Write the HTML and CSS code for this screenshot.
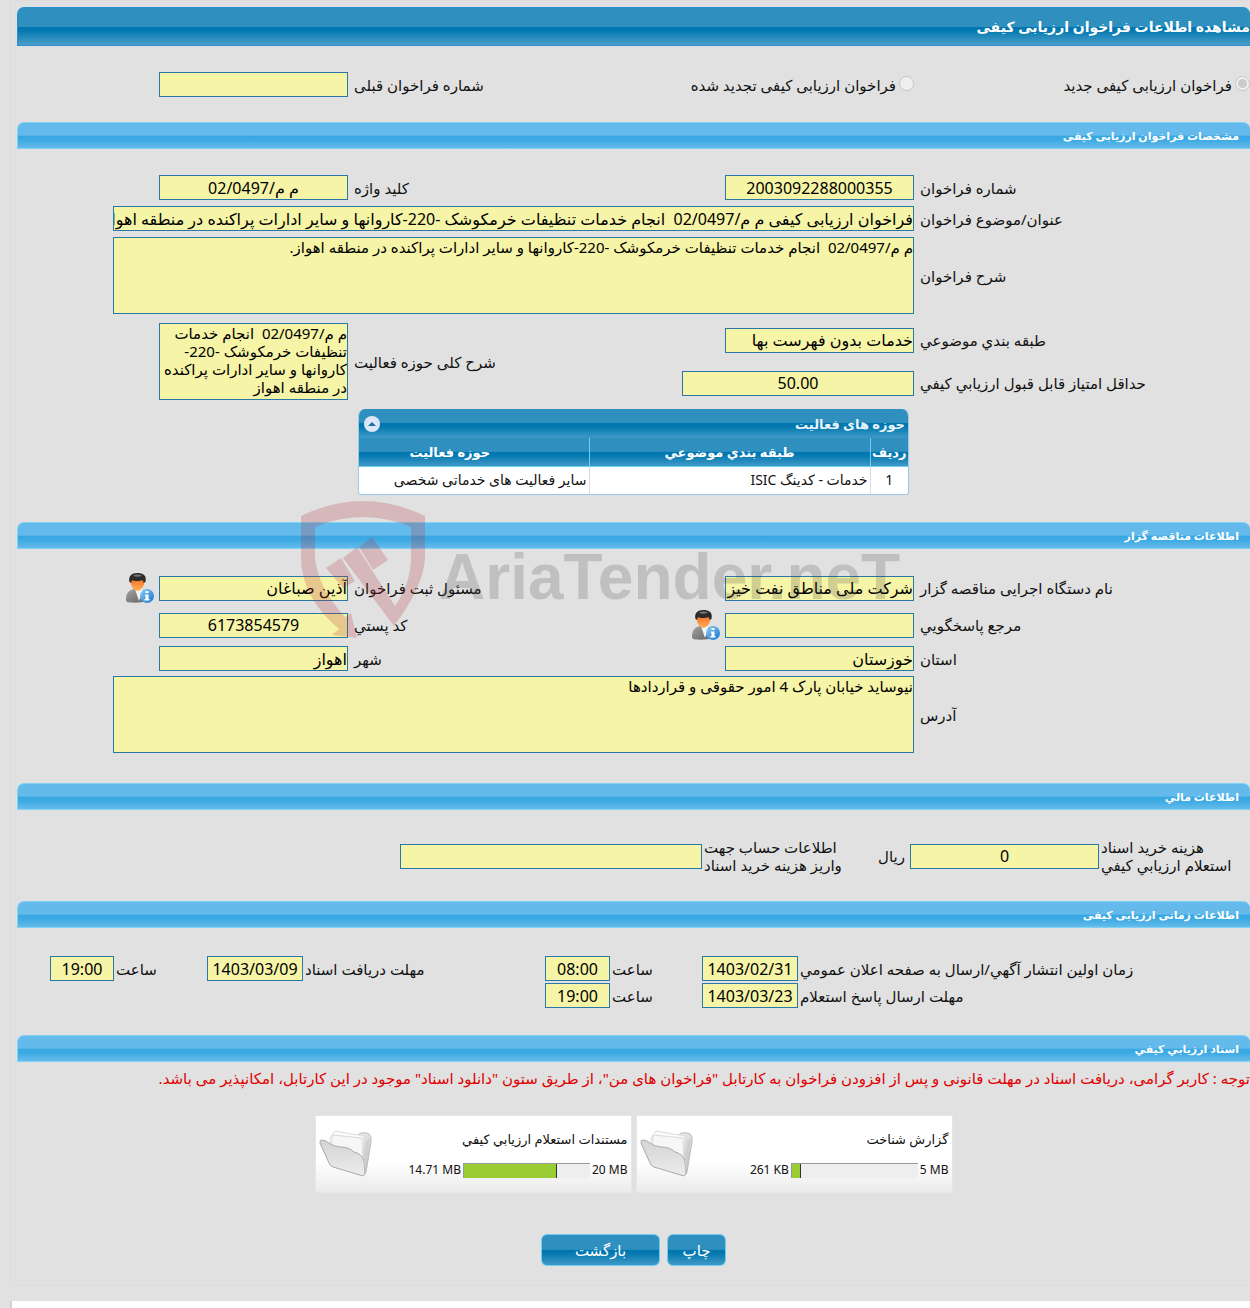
FILE: index.html
```html
<!DOCTYPE html>
<html lang="fa" dir="rtl">
<head>
  <meta charset="UTF-8">
  <title>مشاهده اطلاعات فراخوان ارزیابی کیفی</title>
  <meta name="viewport" content="width=device-width, initial-scale=1">
  <link rel="stylesheet" href="styles.css">
</head>
<body>
  <!-- icons -->
  <svg class="sprite" aria-hidden="true">
    <defs>
      <linearGradient id="gSuit" x1="0" y1="0" x2="1" y2="1">
        <stop offset="0" stop-color="#a5a5a5"/><stop offset="1" stop-color="#5e5e5e"/>
      </linearGradient>
      <linearGradient id="gFace" x1="0" y1="0" x2="0" y2="1">
        <stop offset="0" stop-color="#f26a1b"/><stop offset="1" stop-color="#ffb160"/>
      </linearGradient>
      <linearGradient id="gInfo" x1="0" y1="0" x2="1" y2="1">
        <stop offset="0" stop-color="#8fd0fa"/><stop offset="1" stop-color="#1273cf"/>
      </linearGradient>
      <linearGradient id="gBack" x1="0" y1="0" x2="0" y2="1">
        <stop offset="0" stop-color="#e6e6e6"/><stop offset="1" stop-color="#b4b4b4"/>
      </linearGradient>
      <linearGradient id="gFront" x1="0" y1="0" x2="0" y2="1">
        <stop offset="0" stop-color="#d4d4d4"/><stop offset="1" stop-color="#ececec"/>
      </linearGradient>
    </defs>
    <symbol id="person" viewBox="0 0 32 32">
      <path d="M3 27C3 20 7 18 11 17H18C23 18 24 22 24 29C18 31 8 31 4 30C3 29 3 28 3 27Z" fill="url(#gSuit)"/>
      <path d="M12 17L16 29L20 17Z" fill="#f6f6f6"/>
      <path d="M8 8C8 5 21 5 21 8V12C20 16 17 19 14.500 19C12 19 9 16 8 12Z" fill="url(#gFace)"/>
      <path d="M6.500 10C5 4 9 1 14 1C20 1 24 3 22.500 10L20.500 11C20.500 9 20 8 18 8.500C14 9.500 11 9 9 8L8 11Z" fill="#2b2b2b"/>
      <path d="M10 4C12 2 17 2 19 4C16 5 13 5 10 4Z" fill="#777"/>
      <circle cx="24" cy="24" r="7" fill="url(#gInfo)"/>
      <path d="M22.500 19H25.500V21H22.500ZM22 22.500H25.500V27H26.500V28.500H21.500V27H22.500V24H22Z" fill="#fff"/>
    </symbol>
    <symbol id="folder" viewBox="0 0 54 50">
      <path d="M36 8L40 5Q43 3 47 4L50 5Q53 7 52 13L47 43Q46 46 43 46Z" fill="url(#gBack)" stroke="#bcbcbc"/>
      <path d="M16 2L22 3L45 7L44 40L12 34L11 9Z" fill="#fafafa" stroke="#dedede"/>
      <path d="M13 6L43 9L44 38L12 32Z" fill="#f6f6f6" stroke="#dadada"/>
      <path d="M2 11Q7 11 10 14Q13 17 21 18Q30 18 35 23Q43 25 45 32L46 45L44 47L14 38Q11 37 10 34L1 14Q1 11 2 11Z" fill="url(#gFront)" stroke="#a9a9a9"/>
      <path d="M45 32L48 12L51 8L46 45Z" fill="#cfcfcf"/>
    </symbol>
  </svg>

  <div class="page">
    <h1 class="title">مشاهده اطلاعات فراخوان ارزیابی کیفی</h1>

    <div class="fields kind">
      <div class="choice">
        <input type="radio" id="kindNew" name="kind" checked disabled>
        <label for="kindNew">فراخوان ارزیابی کیفی جدید</label>
      </div>
      <div class="choice">
        <input type="radio" id="kindRenew" name="kind" disabled>
        <label for="kindRenew">فراخوان ارزیابی کیفی تجدید شده</label>
      </div>
      <label class="label" for="prevNo">شماره فراخوان قبلی</label>
      <div><input type="text" class="box" id="prevNo" readonly></div>
    </div>

    <!-- مشخصات فراخوان -->
    <h2 class="bar">مشخصات فراخوان ارزیابی کیفی</h2>
    <div class="fields">
      <label class="label" for="callNo">شماره فراخوان</label>
      <div><input type="text" class="box center" id="callNo" value="2003092288000355" readonly></div>
      <label class="label" for="keyword">کلید واژه</label>
      <div><input type="text" class="box center" id="keyword" value="م م/02/0497" readonly></div>

      <label class="label" for="subject">عنوان/موضوع فراخوان</label>
      <div class="wide"><input type="text" class="box" id="subject" value="فراخوان ارزیابی کیفی م م/02/0497  انجام خدمات تنظیفات خرمکوشک -220-کاروانها و سایر ادارات پراکنده در منطقه اهواز" readonly></div>

      <label class="label" for="desc">شرح فراخوان</label>
      <div class="wide"><textarea class="box area" id="desc" readonly>م م/02/0497  انجام خدمات تنظیفات خرمکوشک -220-کاروانها و سایر ادارات پراکنده در منطقه اهواز.</textarea></div>
    </div>
    <div class="fields category">
      <label class="label" for="category">طبقه بندي موضوعي</label>
      <div><input type="text" class="box" id="category" value="خدمات بدون فهرست بها" readonly></div>
      <label class="label tall" for="scope">شرح کلی حوزه فعالیت</label>
      <div class="tall"><textarea class="box area" id="scope" readonly>م م/02/0497  انجام خدمات تنظیفات خرمکوشک -220-کاروانها و سایر ادارات پراکنده در منطقه اهواز</textarea></div>
      <label class="label" for="minScore">حداقل امتياز قابل قبول ارزيابي كيفي</label>
      <div><input type="text" class="box score center" id="minScore" value="50.00" readonly></div>
    </div>

    <div class="panel">
      <div class="panel-head">
        <span>حوزه های فعالیت</span>
        <button type="button" class="collapse" aria-label="بستن">
          <svg viewBox="0 0 16 16"><circle cx="8" cy="8" r="8" fill="#dbe6f6"/><path d="M4 10L8 6L12 10Z" fill="#1c6f9f"/></svg>
        </button>
      </div>
      <table class="grid">
        <thead>
          <tr><th class="num">ردیف</th><th class="cat">طبقه بندي موضوعي</th><th class="field">حوزه فعالیت</th></tr>
        </thead>
        <tbody>
          <tr><td class="num">1</td><td>خدمات - کدینگ ISIC</td><td>سایر فعالیت های خدماتی شخصی</td></tr>
        </tbody>
      </table>
    </div>

    <!-- مناقصه گزار -->
    <h2 class="bar">اطلاعات مناقصه گزار</h2>
    <div class="fields owner">
      <label class="label" for="org">نام دستگاه اجرایی مناقصه گزار</label>
      <div><input type="text" class="box" id="org" value="شرکت ملی مناطق نفت خیز جنوب" readonly></div>
      <label class="label" for="registrar">مسئول ثبت فراخوان</label>
      <div class="with-icon">
        <input type="text" class="box" id="registrar" value="آذین صباغان" readonly>
        <button type="button" class="person" aria-label="مشخصات"><svg><use href="#person"/></svg></button>
      </div>

      <label class="label" for="contact">مرجع پاسخگويي</label>
      <div class="with-icon">
        <input type="text" class="box" id="contact" readonly>
        <button type="button" class="person" aria-label="مشخصات"><svg><use href="#person"/></svg></button>
      </div>
      <label class="label" for="postal">کد پستي</label>
      <div><input type="text" class="box center" id="postal" value="6173854579" readonly></div>

      <label class="label" for="province">استان</label>
      <div><input type="text" class="box" id="province" value="خوزستان" readonly></div>
      <label class="label" for="city">شهر</label>
      <div><input type="text" class="box" id="city" value="اهواز" readonly></div>

      <label class="label" for="address">آدرس</label>
      <div class="wide"><textarea class="box area" id="address" readonly>نیوساید خیابان پارک 4 امور حقوقی و قراردادها</textarea></div>
    </div>

    <!-- اطلاعات مالی -->
    <h2 class="bar">اطلاعات مالي</h2>
    <div class="money">
      <label class="label" for="fee">هزینه خرید اسناد<br>استعلام ارزيابي كيفي</label>
      <input type="text" class="box center" id="fee" value="0" readonly>
      <span class="unit">ریال</span>
      <label class="label" for="account">اطلاعات حساب جهت<br>واریز هزینه خرید اسناد</label>
      <input type="text" class="box" id="account" readonly>
    </div>

    <!-- زمانبندی -->
    <h2 class="bar">اطلاعات زمانی ارزیابی کیفی</h2>
    <div class="times">
      <label class="label" for="pubDate">زمان اولين انتشار آگهي/ارسال به صفحه اعلان عمومي</label>
      <input type="text" class="box center" id="pubDate" value="1403/02/31" readonly>
      <label class="label" for="pubTime">ساعت</label>
      <input type="text" class="box center" id="pubTime" value="08:00" readonly>
      <label class="label" for="docDate">مهلت دریافت اسناد</label>
      <input type="text" class="box center" id="docDate" value="1403/03/09" readonly>
      <label class="label" for="docTime">ساعت</label>
      <input type="text" class="box center" id="docTime" value="19:00" readonly>

      <label class="label first" for="replyDate">مهلت ارسال پاسخ استعلام</label>
      <input type="text" class="box center" id="replyDate" value="1403/03/23" readonly>
      <label class="label" for="replyTime">ساعت</label>
      <input type="text" class="box center" id="replyTime" value="19:00" readonly>
    </div>

    <!-- اسناد -->
    <h2 class="bar">اسناد ارزيابي كيفي</h2>
    <p class="notice">توجه : کاربر گرامی، دریافت اسناد در مهلت قانونی و پس از افزودن فراخوان به کارتابل "فراخوان های من"، از طریق ستون "دانلود اسناد" موجود در این کارتابل، امکانپذیر می باشد.</p>

    <div class="files">
      <div class="file">
        <div class="file-text">
          <div class="file-name">گزارش شناخت</div>
          <div class="usage" dir="ltr">
            <span>261 KB</span>
            <div class="meter"><div class="used" style="width: 7%"></div></div>
            <span>5 MB</span>
          </div>
        </div>
        <svg class="folder"><use href="#folder"/></svg>
      </div>
      <div class="file">
        <div class="file-text">
          <div class="file-name">مستندات استعلام ارزيابي كيفي</div>
          <div class="usage" dir="ltr">
            <span>14.71 MB</span>
            <div class="meter"><div class="used" style="width: 74%"></div></div>
            <span>20 MB</span>
          </div>
        </div>
        <svg class="folder"><use href="#folder"/></svg>
      </div>
    </div>

    <div class="buttons">
      <button type="button" class="btn">چاپ</button>
      <button type="button" class="btn back">بازگشت</button>
    </div>

    <!-- watermark -->
    <div class="watermark" dir="ltr">
      <svg viewBox="8 8 128 141">
        <path d="M10 25Q72-5 134 25V66Q133 95 103 135L52 67L66 56L104 115Q120 92 120 66V36Q72 16 24 36V66Q26 95 54 126L60 122L66 147L41 144L48 138Q10 106 10 66Z"/>
        <path d="M68 56L81 46L97 69L82 79ZM35 77L50 67L64 90L52 97Z"/>
      </svg>
      <span>AriaTender.neT</span>
    </div>
  </div>

  <div class="bottom"></div>
</body>
</html>
```
FILE: styles.css
```css
* {
  box-sizing: border-box;
}
body {
  margin: 0;
  background: #e1e1e1;
  color: #111;
  font-family: "Noto Sans", "DejaVu Sans", sans-serif;
  font-size: 15px;
  line-height: 18px;
  overflow-x: hidden;
}
.sprite {
  position: absolute;
  width: 0;
  height: 0;
}
.page {
  position: relative;
  margin-left: 10px;
  padding: 6px 0 19px 6px;
  border: 1px solid #dcdcdc;
  border-right: 0;
}

/* headings */
.title {
  margin: 0;
  height: 39px;
  line-height: 37px;
  font-size: 14px;
  color: #fff;
  border: 1px solid #2a8fcf;
  border-width: 1px 0 1px 1px;
  border-radius: 7px 7px 0 0;
  background: linear-gradient(#2f90bf 0, #2f90bf 50%, #0076ae 51%, #0378b0 60%, #4a9fc9 100%);
}
.bar {
  margin: 0;
  height: 27px;
  line-height: 25px;
  padding-right: 11px;
  font-size: 11px;
  color: #fff;
  border: 1px solid #7fd3f5;
  border-width: 1px 0 1px 1px;
  border-radius: 7px 7px 0 0;
  background: linear-gradient(#64baea 0, #64baea 48%, #37a7e2 54%, #3fabe4 70%, #66bbea 100%);
}

/* form rows */
.fields {
  display: grid;
  grid-template-columns: 336fr 416fr 150fr 331fr;
  gap: 6px 0;
  align-items: center;
  margin: 26px 0 9px;
}
.kind {
  margin: 26px 0 25px;
}
.category {
  row-gap: 9px;
  grid-template-rows: 34px 34px;
  margin: 9px 0;
}
.owner {
  row-gap: 5px;
  margin: 23px 0 30px;
}
.label {
  text-align: left;
  padding-left: 6px;
}
.wide {
  grid-column: 2 / 5;
}
.tall {
  grid-row: 1 / 3;
}
.tall.label {
  grid-column: 3;
}
div.tall {
  grid-column: 4;
}
.fields > div {
  display: flex;
}
.choice {
  gap: 3px;
}
.choice input {
  width: 15px;
  height: 15px;
  margin: 0;
}
.box {
  display: block;
  width: 189px;
  height: 25px;
  margin: 0;
  padding: 0;
  border: 1px solid #2a78a8;
  border-radius: 0;
  background: #f6f4a6;
  color: #000;
  font-family: inherit;
  font-size: 16px;
  outline: none;
}
.center {
  text-align: center;
}
.score {
  width: 232px;
}
.area {
  height: 77px;
  font-size: 15px;
  line-height: 18px;
  resize: none;
  overflow: hidden;
}
.wide .box {
  width: 801px;
  max-width: 100%;
}
.with-icon {
  align-items: center;
  gap: 4px;
}
.person {
  width: 32px;
  height: 32px;
  padding: 0;
  border: 0;
  background: none;
  cursor: pointer;
}
.person svg {
  display: block;
  width: 32px;
  height: 32px;
}

/* activity table */
.panel {
  width: 551px;
  margin: 0 auto 27px;
  border: 1px solid #9cc9e6;
  border-top: 0;
  border-radius: 7px 7px 3px 3px;
  overflow: hidden;
}
.panel-head {
  display: flex;
  justify-content: space-between;
  align-items: center;
  height: 29px;
  padding: 0 3px 0 5px;
  color: #e8f4fb;
  font-size: 13px;
  font-weight: bold;
  background: linear-gradient(#2f90bf 0, #2f90bf 48%, #0076ae 50%, #0378b0 60%, #3f99c6 100%);
}
.collapse {
  width: 16px;
  height: 16px;
  padding: 0;
  border: 0;
  background: none;
}
.collapse svg {
  display: block;
}
.grid {
  width: 100%;
  border-collapse: collapse;
  table-layout: fixed;
}
.grid tr {
  height: 28px;
}
.grid th {
  padding: 0;
  color: #fff;
  font-size: 13px;
  border-left: 1px solid #6fcdf2;
  border-bottom: 1px solid #6fcdf2;
  background: linear-gradient(#2f90bf 0, #2f90bf 48%, #0076ae 50%, #0378b0 60%, #3f99c6 100%);
}
.grid td {
  padding: 0 2px;
  font-size: 14px;
  border-left: 1px solid #dcdcdc;
  background: #fff;
}
.grid th:last-child,
.grid td:last-child {
  border-left: 0;
}
.grid .num {
  width: 38px;
  text-align: center;
}
.grid .cat {
  width: 281px;
}
.grid .field {
  padding-right: 48px;
}

/* money and dates */
.money {
  display: grid;
  grid-template-columns: 151fr 189fr 68fr 140fr 302fr 383fr;
  align-items: center;
  margin: 28px 0 27px;
}
.times {
  display: grid;
  grid-template-columns: 452fr 96fr 92fr 65fr 242fr 96fr 93fr 64fr 33fr;
  row-gap: 2px;
  align-items: center;
  margin: 28px 0 27px;
}
.money .label,
.times .label {
  padding-left: 2px;
}
.money .box,
.times .box {
  width: 100%;
}
.money .label {
  white-space: nowrap;
}
.unit {
  padding-right: 5px;
}
.first {
  grid-column: 1;
}

.notice {
  margin: 7px 0 28px;
  color: #e00000;
  white-space: nowrap;
}

/* files */
.files {
  display: flex;
  justify-content: center;
  gap: 4px;
  margin-bottom: 41px;
}
.file {
  display: flex;
  justify-content: space-between;
  align-items: center;
  width: 317px;
  height: 78px;
  padding: 0 3px;
  border: 1px solid #e6e6e6;
  background: linear-gradient(#fff 60%, #ebebeb);
  font-size: 12px;
}
.file-name {
  margin-bottom: 14px;
  font-size: 13px;
}
.usage {
  display: flex;
  justify-content: flex-end;
  align-items: center;
  gap: 2px;
  line-height: 16px;
}
.meter {
  width: 127px;
  height: 15px;
  border: 1px solid #999;
  border-width: 1px 0 0 1px;
  background: #eee;
}
.used {
  height: 100%;
  background: #9acc33;
  border-right: 1px solid #333;
}
.folder {
  width: 54px;
  height: 50px;
}

.buttons {
  display: flex;
  justify-content: center;
  gap: 7px;
}
.btn {
  width: 59px;
  height: 32px;
  padding: 0;
  border: 1px solid #6fcdf2;
  border-radius: 6px;
  color: #fff;
  font-family: inherit;
  font-size: 15px;
  background: linear-gradient(#2f90bf 0, #2f90bf 48%, #0076ae 50%, #0378b0 60%, #3f99c6 100%);
  cursor: pointer;
}
.back {
  width: 119px;
}

.watermark {
  position: absolute;
  top: 498px;
  left: 288px;
  display: flex;
  gap: 12px;
  pointer-events: none;
}
.watermark svg {
  width: 128px;
  height: 141px;
  fill: rgba(180, 40, 50, 0.22);
}
.watermark span {
  font-family: "Liberation Sans", sans-serif;
  font-weight: bold;
  font-size: 64px;
  line-height: 156px;
  color: rgba(60, 60, 60, 0.2);
}

.bottom {
  height: 7px;
  margin: 15px 0 0 10px;
  border-left: 2px solid #d0d0d0;
  background: #fff;
}
```
